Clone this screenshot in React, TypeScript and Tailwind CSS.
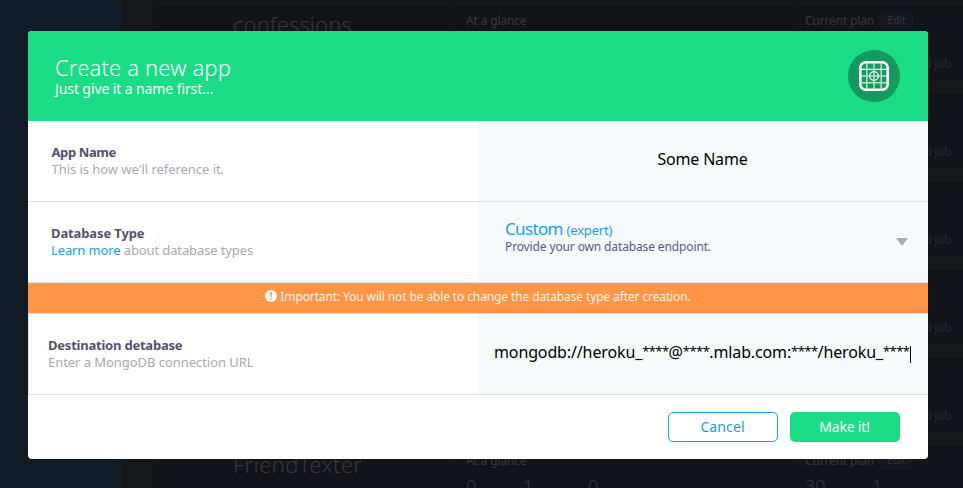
import type { ReactNode } from "react";

function AppCard({ name, tracking }: { name?: string; tracking?: string }) {
  return (
    <div className="flex h-[74px] shrink-0 bg-[#131419] text-[#37343a]">
      <div className="w-[300px] pl-20">
        {name && (
          <div className={`pt-[5px] text-[22px] leading-[29px] font-light whitespace-nowrap ${tracking}`}>{name}</div>
        )}
      </div>
      <div className="w-[339px] border-l border-[#17181d] pl-3">
        {name && (
          <>
            <div className="pt-[7px] text-[12px] leading-[17px] tracking-[-0.15px]">At a glance</div>
            <div className="flex pt-1 text-[18px] leading-[26px] font-light">
              <span className="w-[57px]">0</span>
              <span className="w-[65px]">1</span>
              <span>0</span>
            </div>
          </>
        )}
      </div>
      <div className="flex-1 border-l border-[#17181d] pl-3">
        <div className="flex h-[24px] items-center gap-[5px] pt-[7px] text-[12px] leading-[17px]">
          {name && (
            <>
              <span className="whitespace-nowrap tracking-[-0.15px]">Current plan</span>
              <span className="h-[17px] w-[35px] rounded-[3px] bg-[#14181f] text-center text-[10px] leading-[17px] tracking-[0.1px]">
                Edit
              </span>
            </>
          )}
        </div>
        <div className="flex h-[30px] pt-1 text-[18px] leading-[26px] font-light">
          {name === "FriendTexter" && (
            <>
              <span className="w-[67px]">30</span>
              <span>1</span>
            </>
          )}
        </div>
        {name !== "FriendTexter" && (
          <div className="-mt-1 pr-[12px] text-right text-[12px] leading-[17px] tracking-[-0.3px] text-[#29272d]">
            Add job
          </div>
        )}
      </div>
    </div>
  );
}

function Row({
  title,
  hint,
  children,
  className = "",
  labelClass,
  titleClass,
}: {
  title: string;
  hint: ReactNode;
  children: ReactNode;
  className?: string;
  labelClass: string;
  titleClass: string;
}) {
  return (
    <div className={`flex h-[81px] border-b border-[#dfe2e3] ${className}`}>
      <div className={`flex w-[450px] flex-col justify-center text-[13px] leading-[17px] ${labelClass}`}>
        <div className={`font-bold text-[#55516f] ${titleClass}`}>{title}</div>
        <div className="text-[#a9a7b5]">{hint}</div>
      </div>
      <div className="w-[450px] bg-[#f6fafb]">{children}</div>
    </div>
  );
}

const Stars = () => <span className="align-[2px] text-[13px] leading-none tracking-[-0.55px]">****</span>;

export default function App() {
  return (
    <div className="relative h-[488px] w-full overflow-hidden font-['Noto_Sans','Open_Sans',sans-serif]">
      <div className="flex h-full">
        <div className="w-[123px] shrink-0 bg-[#111b26]" />
        <div className="flex flex-1 flex-col gap-[14px] bg-[#16171b] pt-[5px] pl-[30px]">
          <AppCard name="confessions" tracking="tracking-[0.1px]" />
          <AppCard />
          <AppCard />
          <AppCard />
          <AppCard />
          <AppCard name="FriendTexter" tracking="tracking-[0.4px]" />
        </div>
      </div>

      <div className="absolute top-[31px] left-[28px] flex h-[428px] w-[900px] flex-col overflow-hidden rounded-[4px] bg-white">
        <header className="flex h-[90px] items-start justify-between bg-[#1adc84] pr-7 pl-[27px] text-white">
          <div className="pt-[22px]">
            <h1 className="text-[22px] leading-[28px] font-light tracking-[0.15px]">Create a new app</h1>
            <p className="text-[14px] leading-[15px] tracking-[-0.1px]">Just give it a name first...</p>
          </div>
          <div className="mt-[19px] flex size-[52px] items-center justify-center rounded-full bg-[#149a5d]">
            <svg width="30" height="30" viewBox="0 0 30 30" fill="none" stroke="#fff">
              <path d="M7.8 2v26M15 2v26M22.2 2v26M2 15h26M2 21.8h26" strokeWidth="1.5" opacity=".7" />
              <path d="M2 8.3h26" strokeWidth="1.2" />
              <circle cx="15" cy="15" r="4.3" strokeWidth="1.3" />
              <rect x="1.3" y="1.3" width="27.4" height="27.4" rx="5.5" strokeWidth="2.6" />
            </svg>
          </div>
        </header>

        <Row
          title="App Name"
          titleClass="tracking-[-0.4px]"
          hint={<span className="tracking-[-0.05px]">This is how we'll reference it.</span>}
          labelClass="pl-[23.5px]"
        >
          <div className="flex h-full items-center justify-center pr-px pb-1 text-[16px] tracking-[-0.2px] text-black">
            Some Name
          </div>
        </Row>

        <Row
          title="Database Type"
          titleClass="tracking-[-0.12px]"
          hint={
            <span className="tracking-[-0.12px]">
              <span className="text-[#1b9cec]">Learn more</span> about database types
            </span>
          }
          labelClass="pl-[23px]"
        >
          <div className="flex h-full items-start justify-between pr-5 pl-[27px]">
            <div className="pt-[18px]">
              <div className="text-[17px] leading-[18px] tracking-[-0.65px] text-[#1b9cec]">
                Custom <span className="text-[13px] tracking-[-0.2px]">(expert)</span>
              </div>
              <div className="text-[12px] leading-[16px] tracking-[-0.13px] text-[#5b5878]">
                Provide your own database endpoint.
              </div>
            </div>
            <svg className="mt-9" width="12" height="8" viewBox="0 0 12 8" fill="#a9adae">
              <path d="M0 0h12L6 8z" />
            </svg>
          </div>
        </Row>

        <div className="flex h-[31px] items-center justify-center gap-[3px] border-b border-[#dfe2e3] bg-[#ff9547] pb-[3px] text-[12px] tracking-[-0.12px] text-[#fff4ea]">
          <svg className="-mt-0.5" width="12" height="12" viewBox="0 0 12 12">
            <circle cx="6" cy="6" r="6" fill="#fff" />
            <path d="M5 2.3h2L6.7 6.9H5.3zM5.2 7.9h1.6v1.5H5.2z" fill="#ff9547" />
          </svg>
          Important: You will not be able to change the database type after creation.
        </div>

        <Row
          title="Destination detabase"
          titleClass="tracking-[-0.22px]"
          hint={<span className="tracking-[-0.05px]">Enter a MongoDB connection URL</span>}
          labelClass="border-l border-[#dfe2e3] pl-[19px]"
        >
          <div className="flex h-full items-center pb-1 pl-4 text-[16px] tracking-[-0.13px] whitespace-nowrap text-black">
            <span>
              mongodb://heroku_
              <Stars />@<Stars />
              .mlab.com:
              <Stars />
              /heroku_
              <Stars />
            </span>
            <span className="mt-1 ml-px h-[17px] w-px bg-black" />
          </div>
        </Row>

        <footer className="flex justify-end gap-3 pt-[17px] pr-7 text-[14px]">
          <button className="h-[30px] w-[110px] rounded-[5px] border border-[#1b9cec] pr-px pb-0.5 tracking-[0.1px] text-[#1b9cec]">
            Cancel
          </button>
          <button className="h-[30px] w-[110px] rounded-[5px] bg-[#1adc84] pr-px pb-0.5 tracking-[-0.2px] text-white">
            Make it!
          </button>
        </footer>
      </div>
    </div>
  );
}
